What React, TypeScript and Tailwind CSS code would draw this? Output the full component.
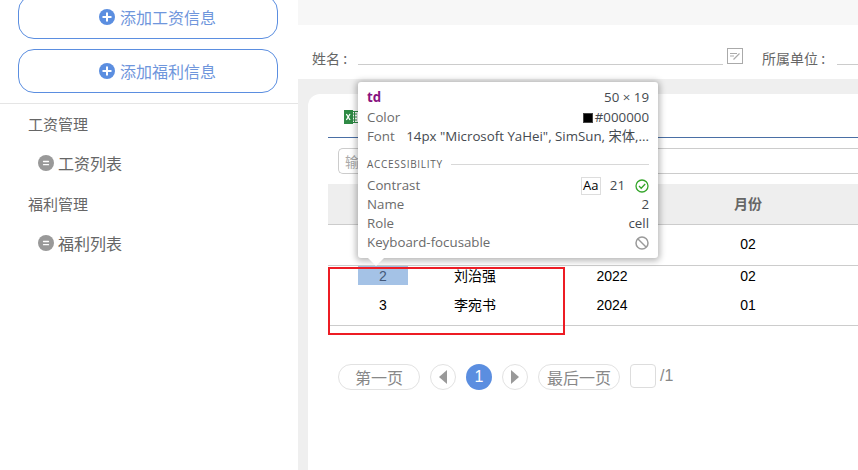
import React from "react";

const cjk = "font-['Noto_Sans_CJK_SC','Noto_Sans',sans-serif]";
const latin = "font-['Liberation_Sans',sans-serif]";

function Plus() {
  return (
    <svg width="16" height="16" viewBox="0 0 16 16" className="shrink-0">
      <circle cx="8" cy="8" r="8" fill="#5b8ee0" />
      <path d="M8 3.5v9M3.5 8h9" stroke="#fff" strokeWidth="2" />
    </svg>
  );
}

function Dot() {
  return (
    <svg width="16" height="16" viewBox="0 0 16 16" className="shrink-0">
      <circle cx="8" cy="8" r="8" fill="#999" />
      <path d="M5.5 6.5h5M5.5 9.7h5" stroke="#fff" strokeWidth="1.3" strokeLinecap="round" />
    </svg>
  );
}

function SideButton({ label }: { label: string }) {
  return (
    <div className="ml-[18px] mr-[20px] flex h-[44px] items-center justify-center gap-[5px] rounded-[16px] border border-[#5b8ee0] bg-white pl-[19px] text-[16px] text-[#6f96dc]">
      <Plus />
      <span>{label}</span>
    </div>
  );
}

function Edit() {
  return (
    <svg width="16" height="16" viewBox="0 0 16 16">
      <rect x="0.5" y="0.5" width="15" height="15" fill="none" stroke="#aaa" />
      <path d="M3 5.5h7M3 8h4M6.5 11.5l6-6" stroke="#aaa" strokeWidth="1.2" fill="none" />
    </svg>
  );
}

function Excel() {
  return (
    <svg width="15" height="14" viewBox="0 0 15 14">
      <rect x="6" y="1.5" width="8.5" height="11" fill="#fff" stroke="#2f8a45" />
      <path d="M8 4h5M8 7h5M8 10h5M10.5 2v10" stroke="#2f8a45" strokeWidth="1" />
      <rect x="0" y="0" width="9" height="14" fill="#2f8a45" />
      <path d="M2.4 4l3.6 6M6 4l-3.6 6" stroke="#fff" strokeWidth="1.3" />
    </svg>
  );
}

function Row({ a, b, c, d, border, h, first }: { a: string; b: string; c: string; d: string; border?: boolean; h: string; first?: boolean }) {
  return (
    <tr className={`${h} ${border ? "border-b border-[#ccc]" : ""}`}>
      <td className="p-0" />
      <td className="p-0 text-center align-top">
        <div className={`h-[19px] leading-[20px] ${latin} ${first ? "bg-[#a4c2e6] text-[#44597a]" : ""}`}>{a}</div>
      </td>
      <td className="p-0 text-center align-top"><div className="h-[19px] leading-[19px]">{b}</div></td>
      <td className="p-0 text-center align-top"><div className={`h-[19px] leading-[20px] ${latin}`}>{c}</div></td>
      <td className="p-0 text-center align-top"><div className={`h-[19px] leading-[20px] ${latin}`}>{d}</div></td>
      <td className="p-0" />
    </tr>
  );
}

function TipRow({ label, children }: { label: string; children: React.ReactNode }) {
  return (
    <div className="flex h-[19px] items-center justify-between leading-[19px]">
      <span className="text-[#6b6b6b]">{label}</span>
      <span className="flex items-center text-[#454a50]">{children}</span>
    </div>
  );
}

function PageChip({ children, w }: { children: React.ReactNode; w: string }) {
  return (
    <div className={`flex h-[26px] ${w} items-center justify-center rounded-full border border-[#e2e2e2] text-[16px] text-[#888]`}>
      {children}
    </div>
  );
}

export default function App() {
  return (
    <div className={`relative flex h-[470px] w-[858px] overflow-hidden bg-white ${cjk}`}>
      <aside className="flex h-full w-[298px] shrink-0 flex-col bg-white">
        <div className="-mt-[5px] flex flex-col gap-[10px] border-b border-[#e5e5e5] pb-[10px]">
          <SideButton label="添加工资信息" />
          <SideButton label="添加福利信息" />
        </div>
        <div className="pl-[28px] text-[#666]">
          <div className="flex h-[40px] items-center text-[15px]">工资管理</div>
          <div className="flex h-[40px] items-center gap-[4px] pb-[2px] pl-[10px] text-[16px]"><Dot />工资列表</div>
          <div className="flex h-[40px] items-center text-[15px]">福利管理</div>
          <div className="flex h-[40px] items-center gap-[4px] pb-[2px] pl-[10px] text-[16px]"><Dot />福利列表</div>
        </div>
      </aside>

      <main className="flex min-w-0 flex-1 flex-col bg-[#efefef]">
        <div className="h-[25px] bg-[#f7f7f7]" />
        <div className="flex h-[54px] items-start bg-white pl-[14px] pt-[23px] text-[14px] text-[#666]">
          <span className="w-[46px] shrink-0 leading-[20px]">姓名 :</span>
          <div className="h-[17px] w-[365px] shrink-0 border-b border-[#ccc]" />
          <div className="ml-[4px] shrink-0"><Edit /></div>
          <span className="ml-[19px] w-[75px] shrink-0 leading-[20px]">所属单位 :</span>
          <div className="h-[17px] flex-1 border-b border-[#ccc]" />
        </div>
        <div className="flex min-h-0 flex-1 pl-[10px] pt-[15px]">
          <div className="flex-1 rounded-tl-[12px] bg-white pl-[20px]">
            <div className="flex h-[44px] items-start border-b border-[#4a6fa5] pl-[16px] pt-[16px]"><Excel /></div>
            <div className="mt-[10px] ml-[10px] flex h-[26px] items-center rounded-l-[5px] border-y border-l border-[#ccc] pl-[6px] text-[14px] text-[#aaa]">输</div>
            <table className="mt-[10px] w-[530px] table-fixed border-collapse text-[14px] text-black">
              <colgroup>
                <col className="w-[30px]" />
                <col className="w-[50px]" />
                <col className="w-[134px]" />
                <col className="w-[140px]" />
                <col className="w-[132px]" />
                <col />
              </colgroup>
              <thead>
                <tr className="h-[40px] border-b border-[#ccc] bg-[#eee] text-[14px] font-bold text-[#666]">
                  <th />
                  <th />
                  <th />
                  <th />
                  <th>月份</th>
                  <th />
                </tr>
              </thead>
              <tbody>
                <tr className="h-[41px] border-b border-[#ccc]">
                  <td />
                  <td />
                  <td />
                  <td />
                  <td className={`text-center ${latin}`}>02</td>
                  <td />
                </tr>
                <Row a="2" b="刘治强" c="2022" d="02" h="h-[30px]" first />
                <Row a="3" b="李宛书" c="2024" d="01" h="h-[30px]" border />
              </tbody>
            </table>
            <div className="ml-[10px] mt-[38px] flex items-start gap-[10px]">
              <PageChip w="w-[82px]">第一页</PageChip>
              <PageChip w="w-[26px]">
                <svg width="10" height="14" viewBox="0 0 10 14"><path d="M9 0v14L1 7z" fill="#999" /></svg>
              </PageChip>
              <div className={`flex h-[26px] w-[26px] items-center justify-center rounded-full bg-[#5b8ee0] text-[16px] text-white ${latin}`}>1</div>
              <PageChip w="w-[26px]">
                <svg width="10" height="14" viewBox="0 0 10 14"><path d="M1 0v14L9 7z" fill="#999" /></svg>
              </PageChip>
              <PageChip w="w-[82px]">最后一页</PageChip>
              <div className="flex items-center gap-[4px]">
                <div className="h-[24px] w-[26px] rounded-[4px] border border-[#ddd]" />
                <span className={`text-[16px] text-[#888] ${latin}`}>/1</span>
              </div>
            </div>
          </div>
        </div>
      </main>

      {/* devtools tooltip */}
      <div className="absolute left-[358px] top-[82px] h-[176px] w-[300px] rounded-[3px] bg-white px-[9px] pt-[6px] font-['Open_Sans','Noto_Sans_CJK_SC',sans-serif] text-[13.3px] shadow-[0_1px_6px_2px_rgba(0,0,0,0.28)]">
        <div className="flex h-[19px] items-center justify-between leading-[19px]">
          <span className="font-bold text-[#881280]">td</span>
          <span className="text-[#454a50]">50 × 19</span>
        </div>
        <div className="mt-[1px]">
          <TipRow label="Color">
            <span className="mr-[2px] inline-block h-[10px] w-[10px] border border-[#444] bg-black" />#000000
          </TipRow>
          <TipRow label="Font">
            <span className="whitespace-nowrap">14px "Microsoft YaHei", SimSun, 宋体,...</span>
          </TipRow>
        </div>
        <div className="mt-[10px] flex h-[16px] items-center gap-[8px] text-[10px] tracking-[0.7px] text-[#5f5f5f]">
          <span>ACCESSIBILITY</span>
          <div className="h-px flex-1 bg-[#d8d8d8]" />
        </div>
        <div className="mt-[4px]">
          <TipRow label="Contrast">
            <span className="mr-[9px] flex h-[18px] w-[20px] items-center justify-center border border-[#ddd] text-[13px] text-black">Aa</span>
            <span className="mr-[10px]">21</span>
            <svg width="14" height="14" viewBox="0 0 14 14" fill="none">
              <circle cx="7" cy="7" r="6" stroke="#34a52a" strokeWidth="1.3" />
              <path d="M4 7l2.2 2.2L10.2 5" stroke="#34a52a" strokeWidth="1.3" />
            </svg>
          </TipRow>
          <TipRow label="Name">2</TipRow>
          <TipRow label="Role">cell</TipRow>
          <TipRow label="Keyboard-focusable">
            <svg width="14" height="14" viewBox="0 0 14 14" fill="none">
              <circle cx="7" cy="7" r="6" stroke="#9a9a9a" strokeWidth="1.5" />
              <path d="M3 3l8 8" stroke="#9a9a9a" strokeWidth="1.5" />
            </svg>
          </TipRow>
        </div>
      </div>
      <div className="absolute left-[368px] top-[258px] h-0 w-0 border-x-[8px] border-t-[8px] border-x-transparent border-t-white" />

      {/* screenshot annotation */}
      <div className="absolute left-[328px] top-[267px] h-[68px] w-[237px] border-2 border-[#ed1c24]" />
    </div>
  );
}
